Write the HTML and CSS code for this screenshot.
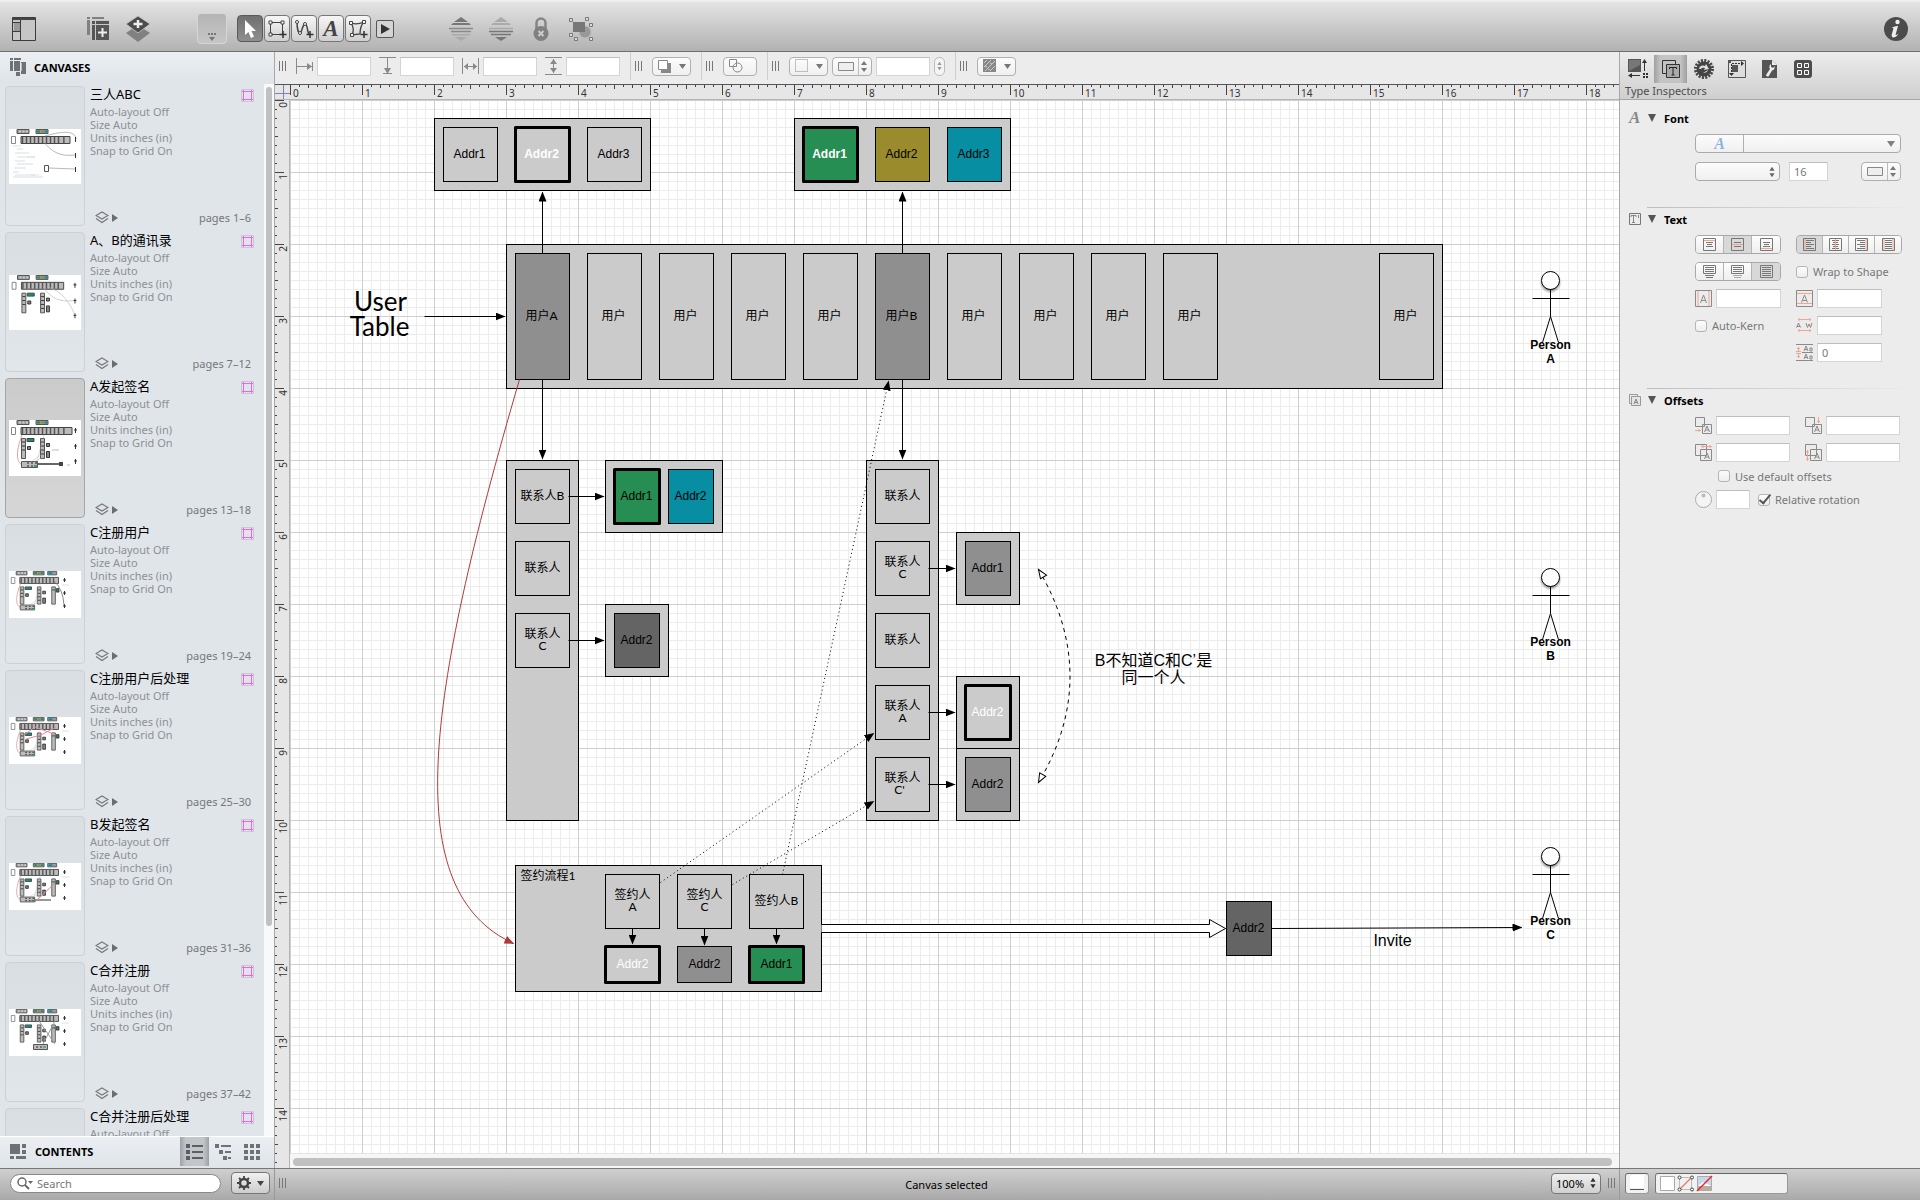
FILE: index.html
```html
<!DOCTYPE html>
<html lang="zh-CN">
<head>
<meta charset="utf-8">
<title>Canvas selected</title>
<link rel="stylesheet" href="styles.css">
</head>
<body>

<!-- shared symbols -->
<svg class="defs" aria-hidden="true">
  <defs>
    <symbol id="layers" viewBox="0 0 14 13"><path d="M7 1l6 3.5L7 8 1 4.500z M1 7.500L7 11.500l6-4" fill="none" stroke="#777" stroke-width="1.200"/></symbol>
    <symbol id="artboard" viewBox="0 0 13 13"><path d="M.5.5h12v12H.5z" fill="none" stroke="#c6c9cf"/><path d="M2.500 1v11M10.500 1v11M1 2.500h11M1 10.500h11" stroke="#f25ff2" fill="none"/></symbol>
    <symbol id="updown" viewBox="0 0 7 12"><path d="M3.500 0L6.500 4.500H.5zM3.500 12L.5 7.500h6z"/></symbol>
    <symbol id="mini-top" viewBox="0 0 72 56">
      <path d="M8 .5h12v4H8zM27 .5h12v4H27z" fill="#999" stroke="#555"/>
      <path d="M10 1.500h2v2h-2zM13.500 1.500h2v2h-2zM17 1.500h2v2h-2z" fill="#ccc"/>
      <path d="M28 1.500h3v2h-3z" fill="#268e52"/><path d="M32 1.500h3v2h-3z" fill="#9a8c2c"/><path d="M35.500 1.500h3v2h-3z" fill="#078ea3"/>
      <path d="M2.500 7.500h4v7h-4z" fill="#fff" stroke="#888"/>
      <path d="M12 7.500h43v7H12z" fill="#bbb" stroke="#444"/>
      <path d="M13.500 8v6M17.500 8v6M21.500 8v6M25.500 8v6M29.500 8v6M33.500 8v6M37.500 8v6M41.500 8v6M45.500 8v6M49.500 8v6" stroke="#555" stroke-width="1.500"/>
    </symbol>
    <symbol id="mini-lists" viewBox="0 0 72 56">
      <path d="M12.500 18.500h4v20h-4zM31.500 18.500h4v20h-4z" fill="#bbb" stroke="#555"/>
      <path d="M13 22h3M13 26h3M13 30h3M32 22h3M32 26h3M32 30h3M32 34h3" stroke="#333"/>
      <path d="M18 18.500h7v3h-7z" fill="#078ea3" stroke="#444"/><path d="M18.500 19h3v2h-3z" fill="#268e52"/>
      <path d="M18.500 26.500h3v3h-3zM37.500 23.500h3v3h-3zM37.500 31.500h3v6h-3z" fill="#888" stroke="#333"/>
    </symbol>
    <symbol id="mini-flow" viewBox="0 0 72 56">
      <path d="M13 15C6 34 8 42 13 45" fill="none" stroke="#d98a86" stroke-width=".8"/>
      <path d="M12.500 41.500h16v6h-16z" fill="#bbb" stroke="#555"/>
      <path d="M18 43h2M22 43h2M26 43h2M18 46h2M22 46h2" stroke="#555" stroke-width="1.500"/><path d="M25 46h3" stroke="#268e52" stroke-width="1.500"/>
      <path d="M22 42L33 34M25 42L34 37M28 41L35 15" stroke="#aaa" stroke-width=".4"/>
    </symbol>
    <symbol id="mini-people" viewBox="0 0 72 56"><path d="M66.500 8v5M66.500 24v5M66.500 39v5M65 10h3M65 26h3M65 41h3" stroke="#333" fill="none"/></symbol>
    <symbol id="mini-c" viewBox="0 0 72 47">
      <g transform="scale(.9 .86)"><use href="#mini-top" width="72" height="56"/><use href="#mini-lists" width="72" height="56"/>
      <path d="M43 .5h10v4H43z" fill="#999" stroke="#555"/><path d="M44 1.500h4v2h-4z" fill="#078ea3"/>
      <path d="M47.500 18.500h4v20h-4z" fill="#bbb" stroke="#555"/><path d="M48 22h3M52.500 20.500h3v4h-3z" fill="#268e52" stroke="#333"/></g>
      <path d="M55.500 7v4M55.500 20v4M55.500 33v4M54 9h3M54 22h3M54 35h3" stroke="#333" fill="none"/>
      <path d="M53 14h7" stroke="#ccc" stroke-width=".6"/>
    </symbol>
    <marker id="head" markerWidth="10" markerHeight="8" refX="9" refY="4" orient="auto-start-reverse" markerUnits="userSpaceOnUse"><path d="M0 0L10 4 0 8z"/></marker>
    <marker id="head-red" markerWidth="10" markerHeight="8" refX="9" refY="4" orient="auto" markerUnits="userSpaceOnUse"><path d="M0 0L10 4 0 8z" fill="#b03a35"/></marker>
    <marker id="head-open" markerWidth="12" markerHeight="9" refX="10" refY="4" orient="auto-start-reverse" markerUnits="userSpaceOnUse"><path d="M1 1L10 4 1 8z" fill="#fff" stroke="#000"/></marker>
    <pattern id="ticks-x" width="72" height="15" patternUnits="userSpaceOnUse"><path d="M.5 0v10M9.500 0v2M18.500 0v3M27.500 0v2M36.500 0v4M45.500 0v2M54.500 0v3M63.500 0v2" stroke="#444"/></pattern>
    <pattern id="ticks-y" width="15" height="72" patternUnits="userSpaceOnUse"><path d="M0 .5h9M0 9.500h2M0 18.500h2M0 27.500h2M0 36.500h3M0 45.500h2M0 54.500h2M0 63.500h2" stroke="#444"/></pattern>
    <filter id="soft" x="-30%" y="-30%" width="160%" height="170%"><feDropShadow dx="0" dy="2" stdDeviation="1" flood-opacity=".4"/></filter>
  </defs>
</svg>

<header class="toolbar">
  <button class="tool-plain at-start" aria-label="Sidebar"><svg width="24" height="24" viewBox="0 0 24 24"><path d="M.5.5h23v23H.5z" fill="#c6c6c6" stroke="#3c3c3c"/><path d="M.5 2.500h23M8.500 3v20M1 5.500h7M1 14.500h7" stroke="#3c3c3c" fill="none"/><path d="M1 1h22v2H1z" fill="#444"/><path d="M2 6h6v8H2z" fill="#999"/></svg></button>
  <span class="cluster">
    <button class="tool-plain" aria-label="New canvas"><svg width="24" height="24" viewBox="0 0 24 24"><path d="M1 1h3v2H1zM6 1h12v2H6zM1 4h3v15H1z" fill="#818181"/><path d="M6 5h17v3H6zM6 9h3v15H6zM10 9h13v15H10z" fill="#565656"/><path d="M5 4.500h18M5.500 4v20M9.500 5v19M6 8.500h17" stroke="#c8c8c8"/><path d="M16.500 12v9M12 16.500h9" stroke="#eee" stroke-width="2"/></svg></button>
    <button class="tool-plain" aria-label="New layer"><svg width="24" height="26" viewBox="0 0 24 26"><path d="M12 9l12 8-12 9-12-9z" fill="#818181"/><path d="M12 0l12 8-12 9L0 8z" fill="#4c4c4c" stroke="#ccc" stroke-width=".8"/><path d="M12 4v8M7.500 8h9" stroke="#eee" stroke-width="2.500"/></svg></button>
  </span>
  <button class="style-well" aria-label="Style"><svg width="12" height="8" viewBox="0 0 12 8"><path d="M2 0h2v2H2zM5 0h2v2H5zM8 0h2v2H8zM3 4h6L6 8z" fill="#777"/></svg></button>
  <span class="tools">
    <button class="tool on" aria-label="Selection"><svg width="16" height="20" viewBox="0 0 16 20"><path d="M3 1v15l3.500-3 2.500 6 3-1.500-2.500-5.500H14z" fill="#fff"/></svg></button>
    <button class="tool" aria-label="Shape"><svg width="20" height="20" viewBox="0 0 20 20"><path d="M3.500 3.500h12v12h-12z" fill="none" stroke="#444"/><path d="M2 2h3v3H2zM14 2h3v3h-3zM2 14h3v3H2z" fill="#fff" stroke="#444"/><path d="M16 12v7M12.500 15.500h7" stroke="#333" stroke-width="1.500"/></svg></button>
    <button class="tool" aria-label="Line"><svg width="20" height="20" viewBox="0 0 20 20"><path d="M3 3C3 8 4 14 6 14S8 6 11 5c3 0 2 9 4 10" fill="none" stroke="#444" stroke-width="1.500"/><circle cx="3" cy="3" r="1.500" fill="#fff" stroke="#444"/><circle cx="6" cy="14" r="1.500" fill="#fff" stroke="#444"/><circle cx="11" cy="5" r="1.500" fill="#fff" stroke="#444"/><path d="M16 12v7M12.500 15.500h7" stroke="#333" stroke-width="1.500"/></svg></button>
    <button class="tool letter" aria-label="Text">A</button>
    <button class="tool" aria-label="Pen"><svg width="20" height="20" viewBox="0 0 20 20"><path d="M3 4q6 2 13-1-4 4-4 12l-8 1q3-6-1-12z" fill="none" stroke="#444" stroke-width="1.300"/><path d="M1.500 2.500h3v3h-3zM14.500 1.500h3v3h-3zM2.500 14.500h3v3h-3z" fill="#fff" stroke="#444"/><path d="M16 12v7M12.500 15.500h7" stroke="#333" stroke-width="1.500"/></svg></button>
  </span>
  <button class="play" aria-label="More tools"><svg width="9" height="10" viewBox="0 0 9 10"><path d="M0 0l9 5-9 5z" fill="#333"/></svg></button>
  <span class="arrange">
    <button class="tool-plain" aria-label="Bring forward"><svg width="24" height="24" viewBox="0 0 24 24"><path d="M12 0l7 5H5z" fill="#777"/><path d="M2 8l2-2h16l2 2z" fill="#777"/><path d="M0 11.500h24M2 14.500h20" stroke="#8a8a8a" stroke-width="1.500"/><path d="M2 17h20l-2 1.500H4zM6 20h12l-6 4z" fill="#aaa"/></svg></button>
    <button class="tool-plain" aria-label="Send backward"><svg width="24" height="24" viewBox="0 0 24 24"><path d="M12 0l7 5H5z" fill="#aaa"/><path d="M2 8l2-2h16l2 2z" fill="#aaa"/><path d="M0 11.500h24" stroke="#aaa" stroke-width="1.500"/><path d="M0 14.500h24M2 17.500h20" stroke="#777" stroke-width="1.500"/><path d="M6 20h12l-6 4z" fill="#777"/></svg></button>
    <button class="tool-plain" aria-label="Lock"><svg width="24" height="24" viewBox="0 0 24 24"><path d="M7.500 13V6a4.500 4.500 0 0 1 9 0v7" fill="none" stroke="#858585" stroke-width="2.500"/><circle cx="12" cy="16.500" r="7.500" fill="#808080"/><path d="M9.500 14l5 5M14.500 14l-5 5" stroke="#ccc" stroke-width="2"/></svg></button>
    <button class="tool-plain" aria-label="Group"><svg width="24" height="24" viewBox="0 0 24 24"><circle cx="16" cy="15" r="6" fill="#999" stroke="#bbb"/><path d="M4 5h12v10H4z" fill="#777"/><path d="M.5 1.500h3v3h-3zM16.500.5h3v3h-3zM.5 16.500h3v3h-3zM20.500 6.500h3v3h-3zM5.500 20.500h3v3h-3zM20.500 20.500h3v3h-3z" fill="#ddd" stroke="#777"/></svg></button>
  </span>
  <button class="tool-plain at-end" aria-label="Info"><svg width="24" height="24" viewBox="0 0 24 24"><circle cx="12" cy="12" r="12" fill="#4c4c4c"/><circle cx="13.500" cy="5" r="2.200" fill="#eee"/><path d="M8 10.500q4-2 6-1.500l-2.500 9q1.500 0 3-1.500-2 4-5.500 4-2-.5-1-4l1.500-5z" fill="#eee"/></svg></button>
</header>

<main class="workspace">
  <aside class="sidebar">
    <h2 class="panel-title"><svg width="18" height="18" viewBox="0 0 18 18"><path d="M1 0h3v2H1zM5 0h7v2H5zM1 3h3v10H1zM5 3h6v10H5zM12 4h5v12h-5zM7 14h4v4H7z" fill="#6f7275"/><path d="M12.500 5v8" stroke="#bbb"/></svg>CANVASES</h2>
    <div class="list-wrap">
      <div class="list">
        <article class="item"><div class="thumb"><svg class="paper" width="72" height="55" viewBox="0 0 72 55"><use href="#mini-top" width="72" height="56"/><path d="M55 7.500h6v7h-6z" fill="#bbb" stroke="#444"/><path d="M36 7C50 3 66 0 67 10M34 12C42 22 50 28 66 26M40 39L66 40" stroke="#999" fill="none" stroke-width=".7"/><path d="M35.500 36.500h4v6h-4z" fill="#fff" stroke="#555"/><path d="M66.500 8v5M66.500 24v5M66.500 38v5" stroke="#333"/><path d="M4 17h8M8 20h6M6 24h14M8 28h18M6 32h10M8 35h16M5 39h12M4 43h6M6 46h20M4 48h30" stroke="#d6dfe8"/><path d="M18 28h8M22 46h8" stroke="#d5e8d2"/></svg></div><div class="info"><h3>三人ABC<svg width="13" height="13"><use href="#artboard"/></svg></h3><p>Auto-layout Off<br>Size Auto<br>Units inches (in)<br>Snap to Grid On</p><div class="pages"><svg width="14" height="13"><use href="#layers"/></svg><i></i><span>pages 1–6</span></div></div></article>
        <article class="item"><div class="thumb"><svg class="paper" width="72" height="55" viewBox="0 0 72 56"><use href="#mini-top" width="72" height="56"/><use href="#mini-lists" width="72" height="56"/><use href="#mini-people" width="72" height="56"/><path d="M34 12C42 24 52 28 65 26M38 12C54 16 62 30 66 40" stroke="#bbb" fill="none" stroke-width=".7"/></svg></div><div class="info"><h3>A、B的通讯录<svg width="13" height="13"><use href="#artboard"/></svg></h3><p>Auto-layout Off<br>Size Auto<br>Units inches (in)<br>Snap to Grid On</p><div class="pages"><svg width="14" height="13"><use href="#layers"/></svg><i></i><span>pages 7–12</span></div></div></article>
        <article class="item"><div class="thumb current"><svg class="paper" width="72" height="56" viewBox="0 0 72 56"><use href="#mini-top" width="72" height="56"/><path d="M55 7.500h8v7h-8z" fill="#bbb" stroke="#444"/><use href="#mini-lists" width="72" height="56"/><use href="#mini-flow" width="72" height="56"/><use href="#mini-people" width="72" height="56"/><path d="M29 44h21" stroke="#333" stroke-width="1.500"/><path d="M50 42h4v4h-4z" fill="#444"/><path d="M43 30h7M58 45h3" stroke="#bbb"/></svg></div><div class="info"><h3>A发起签名<svg width="13" height="13"><use href="#artboard"/></svg></h3><p>Auto-layout Off<br>Size Auto<br>Units inches (in)<br>Snap to Grid On</p><div class="pages"><svg width="14" height="13"><use href="#layers"/></svg><i></i><span>pages 13–18</span></div></div></article>
        <article class="item"><div class="thumb"><svg class="paper" width="72" height="47" viewBox="0 0 72 47"><use href="#mini-c" width="72" height="47"/><g transform="scale(.9 .82)"><use href="#mini-flow" width="72" height="56"/></g><path d="M45 10Q54 18 55 34" fill="none" stroke="#888"/></svg></div><div class="info"><h3>C注册用户<svg width="13" height="13"><use href="#artboard"/></svg></h3><p>Auto-layout Off<br>Size Auto<br>Units inches (in)<br>Snap to Grid On</p><div class="pages"><svg width="14" height="13"><use href="#layers"/></svg><i></i><span>pages 19–24</span></div></div></article>
        <article class="item"><div class="thumb"><svg class="paper" width="72" height="47" viewBox="0 0 72 47"><use href="#mini-c" width="72" height="47"/><g transform="scale(.9 .82)"><use href="#mini-flow" width="72" height="56"/></g><path d="M15 18L26 10 45 17M17 22L32 18 47 10" fill="none" stroke="#e58a9a"/></svg></div><div class="info"><h3>C注册用户后处理<svg width="13" height="13"><use href="#artboard"/></svg></h3><p>Auto-layout Off<br>Size Auto<br>Units inches (in)<br>Snap to Grid On</p><div class="pages"><svg width="14" height="13"><use href="#layers"/></svg><i></i><span>pages 25–30</span></div></div></article>
        <article class="item"><div class="thumb"><svg class="paper" width="72" height="47" viewBox="0 0 72 47"><use href="#mini-c" width="72" height="47"/><g transform="scale(.9 .82)"><use href="#mini-flow" width="72" height="56"/></g><path d="M26 37h16" stroke="#333"/><path d="M26 39L46 20" stroke="#d98a86"/></svg></div><div class="info"><h3>B发起签名<svg width="13" height="13"><use href="#artboard"/></svg></h3><p>Auto-layout Off<br>Size Auto<br>Units inches (in)<br>Snap to Grid On</p><div class="pages"><svg width="14" height="13"><use href="#layers"/></svg><i></i><span>pages 31–36</span></div></div></article>
        <article class="item"><div class="thumb"><svg class="paper" width="72" height="47" viewBox="0 0 72 47"><use href="#mini-c" width="72" height="47"/><path d="M24.500 35.500h14v5h-14z" fill="#bbb" stroke="#555"/><path d="M27 38h2M31 38h2" stroke="#333"/><path d="M34 38h3" stroke="#268e52"/><path d="M30 12L46 35M46 12L34 35" stroke="#999"/></svg></div><div class="info"><h3>C合并注册<svg width="13" height="13"><use href="#artboard"/></svg></h3><p>Auto-layout Off<br>Size Auto<br>Units inches (in)<br>Snap to Grid On</p><div class="pages"><svg width="14" height="13"><use href="#layers"/></svg><i></i><span>pages 37–42</span></div></div></article>
        <article class="item"><div class="thumb"></div><div class="info"><h3>C合并注册后处理<svg width="13" height="13"><use href="#artboard"/></svg></h3><p>Auto-layout Off</p></div></article>
      </div>
      <div class="vscroll"><div class="vthumb"></div></div>
    </div>
    <div class="panel-title contents"><svg width="18" height="18" viewBox="0 0 18 18"><path d="M1 1h10v10H1zM13 1h4v4h-4zM13 7h4v4h-4zM1 13h4v3H1zM7 13h10v3H7z" fill="#6f7275"/></svg><h2>CONTENTS</h2>
      <button class="view on" aria-label="List"><svg width="17" height="16" viewBox="0 0 17 16"><path d="M0 0h4v4H0zM0 6h4v4H0zM0 12h4v4H0zM6 1h11v2H6zM6 7h11v2H6zM6 13h11v2H6z" fill="#5c5f62"/></svg></button>
      <button class="view" aria-label="Outline"><svg width="17" height="16" viewBox="0 0 17 16"><path d="M0 0h4v4H0zM4 6h4v4H4zM8 12h4v4H8zM6 1h10v2H6zM10 7h6v2h-6zM13 13h3v2h-3z" fill="#6f7275"/></svg></button>
      <button class="view" aria-label="Grid"><svg width="17" height="16" viewBox="0 0 17 16"><path d="M0 0h4v4H0zM6 0h4v4H6zM12 0h4v4h-4zM0 6h4v4H0zM6 6h4v4H6zM12 6h4v4h-4zM0 12h4v4H0zM6 12h4v4H6zM12 12h4v4h-4z" fill="#6f7275"/></svg></button>
    </div>
  </aside>

  <section class="stage">
    <div class="options">
      <span class="group"><i class="grip"></i>
        <label class="dim"><svg width="17" height="18" viewBox="0 0 17 18"><path d="M.5 1v16M1 9.500h15M16.500 5v9" stroke="#8a8a8a" fill="none"/><path d="M11 6l5 3.500-5 3.500z" fill="#8a8a8a"/></svg><input class="field" aria-label="X"></label>
        <label class="dim"><svg width="17" height="18" viewBox="0 0 17 18"><path d="M0 .5h17M8.500 1v15M4 16.500h9" stroke="#8a8a8a" fill="none"/><path d="M5 11l3.500 6 3.500-6z" fill="#8a8a8a"/></svg><input class="field" aria-label="Y"></label>
        <label class="dim"><svg width="17" height="18" viewBox="0 0 17 18"><path d="M.5 1v16M16.500 1v16M2 9.500h13" stroke="#8a8a8a" fill="none"/><path d="M2 9.500l4-3.500v7zM15 9.500L11 6v7z" fill="#8a8a8a"/></svg><input class="field" aria-label="Width"></label>
        <label class="dim"><svg width="17" height="18" viewBox="0 0 17 18"><path d="M0 .5h17M0 17.500h17M8.500 2v14" stroke="#8a8a8a" fill="none"/><path d="M8.500 2L12 7H5zM8.500 16L5 11h7z" fill="#8a8a8a"/></svg><input class="field" aria-label="Height"></label>
      </span>
      <span class="group"><i class="grip"></i><button class="pill w39" aria-label="Shadow"><svg width="30" height="14" viewBox="0 0 30 14"><path d="M4 4h10v10H4z" fill="#888"/><path d="M1.500 1.500h9v9h-9z" fill="#fff" stroke="#888"/><path d="M22 5h7l-3.500 5z" fill="#777"/></svg></button></span>
      <span class="group"><i class="grip"></i><button class="pill w34 left" aria-label="Combine"><svg width="14" height="14" viewBox="0 0 14 14"><path d="M.5.5h7v7h-7z" fill="none" stroke="#888"/><circle cx="8.500" cy="8.500" r="4.500" fill="none" stroke="#888"/></svg></button></span>
      <span class="group"><i class="grip"></i><button class="pill w39" aria-label="Stroke"><svg width="30" height="14" viewBox="0 0 30 14"><path d="M1.500.5h12v12h-12z" fill="none" stroke="#888" stroke-dasharray="1 1"/><path d="M22 5h7l-3.500 5z" fill="#777"/></svg></button><button class="pill w40" aria-label="Line type"><svg width="36" height="17" viewBox="0 0 36 17"><path d="M4.500 4.500h15v8h-15z" fill="#eee" stroke="#888"/><path d="M24.500 0v17" stroke="#bbb"/><path d="M30 3l3 4h-6zM30 14l-3-4h6z" fill="#777"/></svg></button><input class="field" aria-label="Thickness"><button class="stepper" aria-label="Step"><svg width="5" height="12" viewBox="0 0 7 12"><use href="#updown" fill="#999"/></svg></button></span>
      <span class="group"><i class="grip"></i><button class="pill w39" aria-label="Image fill"><svg width="30" height="14" viewBox="0 0 30 14"><path d="M1 0h13v13H1z" fill="#888"/><path d="M2 4l3-3M2 8l7-7M3 12L13 2M8 12l5-5M3 7l2 1M8 4l2 1M6 10l2 1" stroke="#ccc"/><path d="M22 5h7l-3.500 5z" fill="#777"/></svg></button></span>
    </div>

    <div class="corner"></div>
    <svg class="ruler-x" width="100%" height="15">
      <rect width="100%" height="15" fill="url(#ticks-x)"/>
      <g><text x="3" y="12">0</text><text x="75" y="12">1</text><text x="147" y="12">2</text><text x="219" y="12">3</text><text x="291" y="12">4</text><text x="363" y="12">5</text><text x="435" y="12">6</text><text x="507" y="12">7</text><text x="579" y="12">8</text><text x="651" y="12">9</text><text x="723" y="12">10</text><text x="795" y="12">11</text><text x="867" y="12">12</text><text x="939" y="12">13</text><text x="1011" y="12">14</text><text x="1083" y="12">15</text><text x="1155" y="12">16</text><text x="1227" y="12">17</text><text x="1299" y="12">18</text></g>
    </svg>
    <div class="ruler-y"><svg width="14" height="100%">
      <rect width="14" height="100%" fill="url(#ticks-y)"/>
      <g transform="rotate(-90)"><text x="-2" y="12">0</text><text x="-74" y="12">1</text><text x="-146" y="12">2</text><text x="-218" y="12">3</text><text x="-290" y="12">4</text><text x="-362" y="12">5</text><text x="-434" y="12">6</text><text x="-506" y="12">7</text><text x="-578" y="12">8</text><text x="-650" y="12">9</text><text x="-722" y="12">10</text><text x="-794" y="12">11</text><text x="-866" y="12">12</text><text x="-938" y="12">13</text><text x="-1010" y="12">14</text></g>
    </svg></div>

    <div class="board">
      <svg class="diagram" width="100%" height="100%">
        <g transform="translate(.5 .5)">
          <!-- address groups -->
          <g class="box"><rect x="144" y="18" width="216" height="72"/><rect x="504" y="18" width="216" height="72"/></g>
          <g class="box"><rect x="153" y="27" width="54" height="54"/><rect class="thick" x="225" y="27" width="54" height="54"/><rect x="297" y="27" width="54" height="54"/>
            <rect class="green thick" x="513" y="27" width="54" height="54"/><rect class="olive" x="585" y="27" width="54" height="54"/><rect class="teal" x="657" y="27" width="54" height="54"/></g>
          <g class="addr"><text x="179" y="57">Addr1</text><text class="white bold" x="251" y="57">Addr2</text><text x="323" y="57">Addr3</text><text class="white bold" x="539" y="57">Addr1</text><text x="611" y="57">Addr2</text><text x="683" y="57">Addr3</text></g>

          <!-- user table -->
          <g class="box"><rect x="216" y="144" width="936" height="144"/><rect class="mid" x="225" y="153" width="54" height="126"/><rect x="297" y="153" width="54" height="126"/><rect x="369" y="153" width="54" height="126"/><rect x="441" y="153" width="54" height="126"/><rect x="513" y="153" width="54" height="126"/><rect class="mid" x="585" y="153" width="54" height="126"/><rect x="657" y="153" width="54" height="126"/><rect x="729" y="153" width="54" height="126"/><rect x="801" y="153" width="54" height="126"/><rect x="873" y="153" width="54" height="126"/><rect x="1089" y="153" width="54" height="126"/></g>
          <g class="cn"><text x="251" y="219">用户A</text><text x="323" y="219">用户</text><text x="395" y="219">用户</text><text x="467" y="219">用户</text><text x="539" y="219">用户</text><text x="611" y="219">用户B</text><text x="683" y="219">用户</text><text x="755" y="219">用户</text><text x="827" y="219">用户</text><text x="899" y="219">用户</text><text x="1115" y="219">用户</text></g>
          <g class="big"><text x="90" y="210">User</text><text x="89" y="235">Table</text></g>

          <!-- contact lists -->
          <g class="box"><rect x="216" y="360" width="72" height="360"/><rect x="225" y="369" width="54" height="54"/><rect x="225" y="441" width="54" height="54"/><rect x="225" y="513" width="54" height="54"/>
            <rect x="315" y="360" width="117" height="72"/><rect class="green thick" x="324" y="369" width="45" height="54"/><rect class="teal" x="378" y="369" width="45" height="54"/>
            <rect x="315" y="504" width="63" height="72"/><rect class="dark" x="324" y="513" width="45" height="54"/>
            <rect x="576" y="360" width="72" height="360"/><rect x="585" y="369" width="54" height="54"/><rect x="585" y="441" width="54" height="54"/><rect x="585" y="513" width="54" height="54"/><rect x="585" y="585" width="54" height="54"/><rect x="585" y="657" width="54" height="54"/>
            <rect x="666" y="432" width="63" height="72"/><rect class="mid" x="675" y="441" width="45" height="54"/>
            <rect x="666" y="576" width="63" height="72"/><rect class="thick" x="675" y="585" width="45" height="54"/>
            <rect x="666" y="648" width="63" height="72"/><rect class="mid" x="675" y="657" width="45" height="54"/></g>
          <g class="cn"><text x="252" y="399">联系人B</text><text x="252" y="471">联系人</text><text x="252" y="537">联系人</text><text x="252" y="549">C</text>
            <text x="612" y="399">联系人</text><text x="612" y="465">联系人</text><text x="612" y="477">C</text><text x="612" y="543">联系人</text><text x="612" y="609">联系人</text><text x="612" y="621">A</text><text x="612" y="681">联系人</text><text x="609" y="693">C'</text></g>
          <g class="addr"><text x="346" y="399">Addr1</text><text x="400" y="399">Addr2</text><text x="346" y="543">Addr2</text><text x="697" y="471">Addr1</text><text class="white" x="697" y="615">Addr2</text><text x="697" y="687">Addr2</text></g>

          <!-- signing flow -->
          <g class="box"><rect x="225" y="765" width="306" height="126"/><rect x="315" y="774" width="54" height="54"/><rect x="387" y="774" width="54" height="54"/><rect x="459" y="774" width="54" height="54"/><rect class="thick" x="315" y="846" width="54" height="36"/><rect class="mid" x="387" y="846" width="54" height="36"/><rect class="green thick" x="459" y="846" width="54" height="36"/><rect class="dark" x="936" y="801" width="45" height="54"/></g>
          <g class="cn"><text class="start" x="230" y="779">签约流程1</text><text x="342" y="798">签约人</text><text x="342" y="810">A</text><text x="414" y="798">签约人</text><text x="414" y="810">C</text><text x="486" y="804">签约人B</text></g>
          <g class="addr"><text class="white" x="342" y="867">Addr2</text><text x="414" y="867">Addr2</text><text x="486" y="867">Addr1</text><text x="958" y="831">Addr2</text></g>

          <!-- connectors -->
          <g class="edge"><path d="M252 153V92"/><path d="M612 153V92"/><path d="M252 279V358"/><path d="M612 279V358"/><path d="M134 216H214"/><path d="M278 396H313"/><path d="M278 540H313"/><path d="M638 468H664"/><path d="M638 612H664"/><path d="M638 684H664"/><path d="M342 828V843"/><path d="M414 828V844"/><path d="M486 828V843"/><path d="M981 828L1231 827"/></g>
          <g class="edge dots"><path d="M370 782L583 633"/><path d="M442 784L583 701"/><path d="M492 774L598 281"/></g>
          <path class="edge-red" d="M229 279C135 600 108 790 223 843"/>
          <path class="edge-dash" d="M748 469C790 540 790 612 748 682"/>
          <path class="pipe" d="M531 824H919V819L935 828 919 837V832H531"/>

          <!-- people -->
          <g class="person"><circle cx="1260" cy="180" r="9"/><path d="M1260 189v27M1242 198h37M1260 216l-8 26M1260 216l8 26"/><text x="1260" y="248">Person</text><text x="1260" y="262">A</text></g>
          <g class="person"><circle cx="1260" cy="477" r="9"/><path d="M1260 486v27M1242 495h37M1260 513l-8 26M1260 513l8 26"/><text x="1260" y="545">Person</text><text x="1260" y="559">B</text></g>
          <g class="person"><circle cx="1260" cy="756" r="9"/><path d="M1260 765v27M1242 774h37M1260 792l-8 26M1260 792l8 26"/><text x="1260" y="824">Person</text><text x="1260" y="838">C</text></g>

          <g class="note"><text x="863" y="565">B不知道C和C’是</text><text x="863" y="582">同一个人</text><text x="1102" y="845">Invite</text></g>
        </g>
      </svg>
    </div>
    <div class="hscroll"><div class="hthumb"></div></div>
  </section>

  <aside class="inspector">
    <div class="tabs">
      <div class="tab-row">
        <button class="tab" aria-label="Properties"><svg width="20" height="20" viewBox="0 0 20 20"><path d="M0 0h13v13H0z" fill="#555"/><path d="M1 12L12 6V1H1z" fill="#777"/><path d="M16.500 2v10M3 16.500h9" stroke="#333"/><path d="M16.500 0L19 4h-5zM0 16.500L4 14v5zM15 14h2v2h-2zM18 14h2v2h-2zM15 17h2v2h-2zM18 17h2v2h-2z" fill="#333"/></svg></button>
        <button class="tab on" aria-label="Type"><svg width="20" height="20" viewBox="0 0 20 20"><path d="M1.500 1.500h13v13h-13z" fill="none" stroke="#333"/><path d="M5.500 5.500h13v13h-13z" fill="#aaa" stroke="#333"/><path d="M8.500 10V8.500h7V10M12 9v7M10.500 16h3" stroke="#222" fill="none"/></svg></button>
        <button class="tab" aria-label="Settings"><svg width="20" height="20" viewBox="0 0 20 20"><circle cx="10" cy="10" r="8.500" fill="none" stroke="#444" stroke-width="3" stroke-dasharray="2 1.340"/><circle cx="10" cy="10" r="7.500" fill="#444"/><path d="M5 10a4 4 0 0 1 6-3l1-2 3 5-5 1 1-2q-3-1-4 1zM9 14q4 0 5-3" fill="#ddd"/></svg></button>
        <button class="tab" aria-label="Canvas"><svg width="20" height="20" viewBox="0 0 20 20"><path d="M1.500 1.500h17v17h-17z" fill="#ddd" stroke="#555"/><path d="M1 1h3v3H1zM5 6h6v7H5z" fill="#555"/><path d="M5 4.500h12M4.500 5v12" stroke="#333" stroke-dasharray="2 1"/><path d="M14 2l3 2.500L14 7zM2 14l2.500 3L7 14z" fill="#333"/></svg></button>
        <button class="tab" aria-label="Document"><svg width="20" height="20" viewBox="0 0 20 20"><path d="M2 1h10l5 5v13H2z" fill="#555"/><path d="M12 1v5h5" fill="#eee"/><path d="M6 16l4-6a3.500 3.500 0 0 1 1-5v3l2 1 1.500-2q.5 4-2.500 4.500l-3.500 6q-2 .5-2.500-1.500z" fill="#eee"/></svg></button>
        <button class="tab" aria-label="Stencils"><svg width="20" height="20" viewBox="0 0 20 20"><rect x="1" y="1" width="18" height="18" rx="3" fill="#4c4c4c"/><path d="M4.500 4.500h4v4h-4zM11.500 4.500h4v4h-4zM4.500 11.500h4v4h-4zM11.500 11.500h4v4h-4z" fill="#555" stroke="#fff"/></svg></button>
      </div>
      <p>Type Inspectors</p>
    </div>

    <section class="sect">
      <h3><span class="serif-a">A</span><i class="disclose"></i>Font</h3>
      <div class="rows loose">
        <div class="row split"><button class="fontbtn" aria-label="Fonts">A</button><select aria-label="Family" class="family"><option></option></select></div>
        <div class="row gap9"><span class="sel w85"><select aria-label="Typeface"><option></option></select><svg width="6" height="12" viewBox="0 0 7 12"><use href="#updown" fill="#666"/></svg></span><input class="field w39" aria-label="Size" value="16"><button class="pill w40 push" aria-label="Color"><svg width="36" height="17" viewBox="0 0 36 17"><path d="M4.500 4.500h15v8h-15z" fill="#eee" stroke="#888"/><path d="M24.500 0v17" stroke="#bbb"/><path d="M30 3l3 4h-6zM30 14l-3-4h6z" fill="#777"/></svg></button></div>
      </div>
    </section>

    <section class="sect">
      <h3><svg width="12" height="12" viewBox="0 0 12 12"><path d="M.5.5h11v11H.5z" fill="none" stroke="#777"/><path d="M2 4V2.500h5V4M4.500 3v6M3 9.500h3M9.500 2v3" stroke="#888" fill="none"/></svg><i class="disclose"></i>Text</h3>
      <div class="rows">
        <div class="row two">
          <span class="seg s28"><button aria-label="Top"><svg viewBox="0 0 13 13"><path d="M.5.5h12v12H.5z M3 4.500h7M4 6.500h5M3 8.500h7"/><path class="o" d="M1 2.500h11"/></svg></button><button class="on" aria-label="Middle"><svg viewBox="0 0 13 13"><path d="M.5.5h12v12H.5z M3 4.500h7M3 8.500h7"/><path class="o" d="M1 6.500h11"/></svg></button><button aria-label="Bottom"><svg viewBox="0 0 13 13"><path d="M.5.5h12v12H.5z M3 4.500h7M4 6.500h5M3 8.500h7"/><path class="o" d="M1 10.500h11"/></svg></button></span>
          <span class="seg s26"><button class="on" aria-label="Left"><svg viewBox="0 0 13 13"><path d="M.5.5h12v12H.5z M3 2.500h8M3 4.500h5M3 6.500h8M3 8.500h5M3 10.500h8"/><path class="o" d="M2 1v11"/></svg></button><button aria-label="Center"><svg viewBox="0 0 13 13"><path d="M.5.5h12v12H.5z M3 2.500h7M4 4.500h5M3 6.500h7M4 8.500h5M3 10.500h7"/><path class="o" d="M6.500 1v11"/></svg></button><button aria-label="Right"><svg viewBox="0 0 13 13"><path d="M.5.5h12v12H.5z M2 2.500h8M5 4.500h5M2 6.500h8M5 8.500h5M2 10.500h8"/><path class="o" d="M11 1v11"/></svg></button><button aria-label="Justify"><svg viewBox="0 0 13 13"><path d="M.5.5h12v12H.5z M3 2.500h7M3 4.500h7M3 6.500h7M3 8.500h7M3 10.500h7"/><path class="o" d="M2 1v11M11 1v11"/></svg></button></span>
        </div>
        <div class="row two">
          <span class="seg s28"><button aria-label="Overflow"><svg viewBox="0 0 13 13"><path d="M.5.5h12v8H.5zM2 2.500h9M2 4.500h9M2 6.500h9M2 10.500h9M3 12.500h7"/></svg></button><button aria-label="Clip"><svg viewBox="0 0 13 13"><path d="M.5.5h12v8H.5zM2 2.500h9M2 4.500h9M2 6.500h9"/><path class="l" d="M2 10.500h9M3 12.500h7"/></svg></button><button class="on" aria-label="Fit"><svg viewBox="0 0 13 13"><path d="M.5.5h12v12H.5zM2 2.500h9M2 4.500h9M2 6.500h9M2 8.500h9M2 10.500h9"/></svg></button></span>
          <label class="check"><input type="checkbox">Wrap to Shape</label>
        </div>
        <div class="row two">
          <label class="mini"><svg viewBox="0 0 17 17"><path d="M.5.5h16v16H.5zM5.500 13L8.500 5l3 8M6.500 10.500h4"/><path class="o" d="M3 1v15M14 1v15"/></svg><input class="field w65" aria-label="Side margin"></label>
          <label class="mini"><svg viewBox="0 0 17 17"><path d="M.5.5h16v16H.5zM5.500 12.500L8.500 5l3 7.500M6.500 10.500h4"/><path class="o" d="M1 3.500h15M1 13.500h15"/></svg><input class="field w65" aria-label="Top margin"></label>
        </div>
        <div class="row two">
          <label class="check"><input type="checkbox">Auto-Kern</label>
          <label class="mini"><svg viewBox="0 0 17 17"><path d="M.5 10.500L2.500 6l2 4.500M1 9.500h3M10 6l1.500 4.500L13 7l1.500 3.500L16 6"/><path class="o" d="M2 2.500h13M2 13.500h13M3 1v3M14 1v3M3 12v3M14 12v3"/></svg><input class="field w65" aria-label="Character spacing"></label>
        </div>
        <div class="row two">
          <span></span>
          <label class="mini"><svg viewBox="0 0 17 17"><path d="M0 .5h17M6 8.500h11M0 16.500h17M8 7l2-5 2 5M8.500 5.500h3M16 7V4h-2v3h2M8 15l2-5 2 5M8.500 13.500h3M16 15v-3h-2v3h2"/><path class="o" d="M0 7.500h5M0 9.500h5M2.500 3v4M2.500 10v4M1 4.500h3M1 12.500h3"/></svg><input class="field w65" aria-label="Line spacing" value="0"></label>
        </div>
      </div>
    </section>

    <section class="sect">
      <h3><svg width="12" height="12" viewBox="0 0 12 12"><path d="M.5.5h8v9h-8z" fill="none" stroke="#999"/><path d="M2.500 2.500h9v9h-9z" fill="#e4e4e4" stroke="#999"/><path d="M5 10l2-5 2 5M5.500 8.500h3" stroke="#888" fill="none"/></svg><i class="disclose"></i>Offsets</h3>
      <div class="rows">
        <div class="row wide">
          <label class="mini"><svg viewBox="0 0 17 17"><path d="M.5.5h9v9h-9zM7.500 7.500h9v9h-9zM9.500 15L12 9l2.500 6M10 13h4"/><path class="o" d="M0 13.500h6M4 12v3"/></svg><input class="field w74" aria-label="Offset X"></label>
          <label class="mini"><svg viewBox="0 0 17 17"><path d="M.5.5h9v9h-9zM7.500 7.500h9v9h-9zM9.500 15L12 9l2.500 6M10 13h4"/><path class="o" d="M13.500 0v6M12 4.500h3"/></svg><input class="field w74" aria-label="Offset Y"></label>
        </div>
        <div class="row wide">
          <label class="mini"><svg viewBox="0 0 17 17"><path d="M.5.5h11v11H.5zM5.500 5.500h11v11h-11zM9.500 15L12 9l2.500 6M10 13h4"/><path class="o" d="M6 2.500h11M8 1v3M15 1v3"/></svg><input class="field w74" aria-label="Offset width"></label>
          <label class="mini"><svg viewBox="0 0 17 17"><path d="M.5.5h11v11H.5zM5.500 5.500h11v11h-11zM9.500 15L12 9l2.500 6M10 13h4"/><path class="o" d="M2.500 6v11M1 8h3M1 15h3"/></svg><input class="field w74" aria-label="Offset height"></label>
        </div>
        <div class="row inset"><label class="check"><input type="checkbox">Use default offsets</label></div>
        <div class="row"><label class="mini"><svg viewBox="0 0 17 17"><circle cx="8.500" cy="8.500" r="8" class="dial"/><circle cx="8.500" cy="4.500" r="2" class="knob"/></svg><input class="field w34" aria-label="Rotation"></label><label class="check rel"><input type="checkbox" checked>Relative rotation</label></div>
      </div>
    </section>
  </aside>
</main>

<footer class="status">
  <div class="status-left">
    <label class="search"><svg width="16" height="13" viewBox="0 0 16 13"><circle cx="5" cy="5" r="4" fill="none" stroke="#666" stroke-width="1.500"/><path d="M8 8l4 4" stroke="#666" stroke-width="2"/><path d="M11 4h5l-2.500 3z" fill="#666"/></svg><input type="search" placeholder="Search" aria-label="Search"></label>
    <button class="gear" aria-label="Actions"><svg width="28" height="14" viewBox="0 0 28 14"><circle cx="7" cy="7" r="4" fill="none" stroke="#444" stroke-width="2.500"/><path d="M7 0v3M7 11v3M0 7h3M11 7h3M2 2l2.500 2.500M9.500 9.500L12 12M12 2L9.500 4.500M4.500 9.500L2 12" stroke="#444" stroke-width="1.800"/><path d="M20 5h7l-3.500 5z" fill="#444"/></svg></button>
  </div>
  <div class="status-mid"><i class="grip"></i><span class="message">Canvas selected</span>
    <span class="sel zoom"><select aria-label="Zoom"><option>100%</option></select><svg width="6" height="12" viewBox="0 0 7 12"><use href="#updown" fill="#333"/></svg></span><i class="grip"></i></div>
  <div class="status-right">
    <button class="well w24" aria-label="Fill"><svg width="14" height="16" viewBox="0 0 14 16"><path d="M0 0h14v13H0z" fill="#fff"/><path d="M0 14.500h14" stroke="#555"/></svg></button>
    <button class="well w133" aria-label="Styles"><svg width="54" height="17" viewBox="0 0 54 17"><path d="M.5 1.500h14v14H.5z" fill="#fff" stroke="#aaa"/><path d="M19.500 2.500h12v12h-12z" fill="none" stroke="#bbb"/><path d="M19 15L32 2" stroke="#f37d6c" stroke-width="1.500"/><g fill="#fff" stroke="#444"><circle cx="19.500" cy="2.500" r="1.500"/><circle cx="32" cy="2.500" r="1.500"/><circle cx="19.500" cy="14.500" r="1.500"/><circle cx="32" cy="14.500" r="1.500"/></g><path d="M37.500 1.500h14v14h-14z" fill="#c4d9ef" stroke="#aaa"/><path d="M38 11h13v4H38z" fill="#b8ada0"/><path d="M38 11l5-4 8 4z" fill="#fff"/><path d="M37 16L52 1" stroke="#e22" stroke-width="1.500"/></svg></button>
  </div>
</footer>
</body>
</html>
```
FILE: styles.css
```css
* { box-sizing: border-box; }
html, body { height: 100%; }
body {
  margin: 0;
  display: flex;
  flex-direction: column;
  overflow: hidden;
  background: #ececec;
  color: #000;
  font: 11px/13px "Noto Sans", "Noto Sans CJK SC", sans-serif;
}
h2, h3, p { margin: 0; font: inherit; }
button, input, select { margin: 0; padding: 0; font: inherit; color: inherit; border: 0; background: none; }
svg { display: block; flex: none; }
.defs { position: absolute; width: 0; height: 0; }

/* toolbar */
.toolbar {
  flex: none;
  height: 52px;
  display: flex;
  align-items: center;
  padding: 6px 12px 0;
  background: linear-gradient(#f4f4f4, #e2e2e2 3px, #b2b2b2);
  border-bottom: 1px solid #6f6f6f;
}
.tool-plain { width: 24px; display: flex; justify-content: center; }
.cluster { display: flex; gap: 16px; margin-left: 50px; }
.style-well {
  width: 30px; height: 31px; margin-left: 47px;
  display: flex; align-items: flex-end; justify-content: center; padding-bottom: 2px;
  border: 1px solid #d6d6d6; border-radius: 4px;
  background: linear-gradient(#b4b4b4, #c6c6c6);
}
.tools { display: flex; gap: 1px; margin-left: 10px; }
.tool {
  width: 26px; height: 27px;
  display: flex; align-items: center; justify-content: center;
  border: 1px solid #777; border-radius: 4px;
  background: linear-gradient(#f6f6f6, #d0d0d0);
}
.tool.on { background: linear-gradient(#707070, #8f8f8f); border-color: #5a5a5a; }
.tool.letter { font: italic bold 23px/23px "Liberation Serif", serif; color: #444; }
.play {
  width: 18px; height: 18px; margin-left: 5px;
  display: flex; align-items: center; justify-content: center;
  border: 1px solid #555; border-radius: 2px; background: #d4d4d4;
}
.arrange { display: flex; gap: 16px; margin-left: 55px; }
.at-end { margin-left: auto; }

/* three column body */
.workspace { flex: 1; min-height: 0; display: grid; grid-template-columns: 275px 1fr 301px; }

/* sidebar */
.sidebar { display: flex; flex-direction: column; min-height: 0; background: #e0e5ea; border-right: 1px solid #a8a8a8; }
.panel-title {
  flex: none; height: 32px;
  display: flex; align-items: center; gap: 7px;
  padding: 0 0 2px 9px;
  font-weight: 700;
  background: linear-gradient(#ebeff3, #dfe4e9);
}
.contents { border-top: 1px solid #fff; gap: 8px; }
.contents h2 { margin-right: auto; }
.view { width: 29px; height: 29px; display: flex; align-items: center; justify-content: center; margin-left: -8px; }
.view:last-child { margin-right: 7px; }
.view.on { background: linear-gradient(90deg, #9da1a5, #c2c6ca 20%, #c2c6ca 80%, #9da1a5); }
.list-wrap { flex: 1; min-height: 0; display: flex; overflow: hidden; }
.list { flex: 1; display: flex; flex-direction: column; gap: 6px; padding: 2px 10px 0 5px; }
.item { flex: none; height: 140px; display: flex; gap: 5px; }
.thumb {
  width: 80px; flex: none;
  display: flex; align-items: center; justify-content: center;
  border: 1px solid #cdd1d5; border-radius: 4px;
  background: linear-gradient(#d9dee3, #e1e6ea);
}
.thumb.current { border: 1px solid #a5a5a5; background: linear-gradient(#cbcbcb, #d6d6d6); }
.paper { background: #fff; }
.info { flex: 1; display: flex; flex-direction: column; }
.info h3 { height: 16px; display: flex; justify-content: space-between; align-items: center; font-size: 13px; line-height: 16px; white-space: nowrap; }
.info h3 svg { margin-top: 2px; }
.info p { margin-top: 3px; color: #8e9092; }
.pages { margin-top: auto; padding: 0 3px 2px 5px; display: flex; align-items: center; gap: 3px; color: #75777a; }
.pages i { border: 4px solid transparent; border-left: 6px solid #6b6d70; border-right: 0; }
.pages span { margin-left: auto; }
.vscroll { width: 10px; padding: 3px 2px 0; background: #f8f9fa; }
.vthumb { height: 80%; width: 6px; border-radius: 3px; background: #c0c1c2; }

/* stage */
.stage { min-width: 0; min-height: 0; display: grid; grid-template-columns: 15px 1fr; grid-template-rows: 32px 16px 1fr 15px; background: #fff; }
.options { grid-column: 1 / -1; display: flex; background: #ececec; padding-left: 4px; }
.group { display: flex; align-items: center; height: 28px; padding-right: 10px; margin-right: 4px; gap: 4px; border-right: 1px solid #cfcfcf; }
.group:last-child { border: 0; }
.group:first-child { gap: 8px; }
.grip { flex: none; width: 7px; height: 10px; margin-right: 6px; border-left: 1px solid #777; border-right: 1px solid #777; background: linear-gradient(90deg, transparent 2px, #777 2px, #777 3px, transparent 3px); }
.group:first-child .grip { margin-right: 2px; }
.dim { display: flex; align-items: center; gap: 4px; }
.field {
  width: 54px; height: 19px; padding: 0 4px;
  background: #fff; border: 1px solid #d4d4d4; border-top-color: #bdbdbd; color: #777;
}
.pill {
  height: 19px; display: flex; align-items: center; justify-content: center;
  border: 1px solid #b0b0b0; border-radius: 4px;
  background: linear-gradient(#fcfcfc, #f0f0f0);
}
.pill.left { justify-content: flex-start; padding-left: 5px; }
.stepper { width: 11px; height: 19px; display: flex; align-items: center; justify-content: center; border: 1px solid #bdbdbd; border-radius: 5px; background: #f4f4f4; }
.w24 { width: 24px; } .w34 { width: 34px; } .w39 { width: 39px; } .w40 { width: 40px; }
.w65 { width: 65px; } .w74 { width: 74px; } .w85 { width: 85px; } .w133 { width: 133px; }

.corner {
  border-top: 1px solid #555; border-bottom: 1px solid #b4b4b4;
  background: linear-gradient(#8080c0, #8080c0) 8px 0 / 1px 100% no-repeat, linear-gradient(#8080c0, #8080c0) 0 8px / 100% 1px no-repeat, #e6e6e6;
}
.ruler-x { height: 16px; width: 100%; min-width: 0; background: #e6e6e6; border-top: 1px solid #555; border-bottom: 1px solid #b4b4b4; overflow: hidden; }
.ruler-y { grid-row: 3 / 5; background: #e6e6e6; border-right: 1px solid #b4b4b4; overflow: hidden; min-height: 0; }
.ruler-x text, .ruler-y text { font-size: 10px; fill: #333; }
.ruler-y text { text-anchor: end; }
.board {
  min-width: 0; min-height: 0; overflow: hidden;
  background:
    linear-gradient(90deg, #cfcfcf 1px, transparent 1px) 0 0 / 72px 72px,
    linear-gradient(#cfcfcf 1px, transparent 1px) 0 0 / 72px 72px,
    linear-gradient(90deg, #ececec 1px, transparent 1px) 0 0 / 9px 9px,
    linear-gradient(#ececec 1px, transparent 1px) 0 0 / 9px 9px,
    #fff;
}
.hscroll { padding: 4px 7px 0 3px; background: #f6f6f6; border-top: 1px solid #e4e4e4; }
.hthumb { height: 8px; border-radius: 4px; background: #c0c0c0; }

/* diagram */
.box rect { fill: #cbcbcb; stroke: #000; stroke-width: 1; }
.box .thick { stroke-width: 3; stroke-linejoin: round; }
.box .green { fill: #268e52; }
.box .olive { fill: #9a8c2c; }
.box .teal { fill: #078ea3; }
.box .mid { fill: #8f8f8f; }
.box .dark { fill: #646464; }
.diagram text { text-anchor: middle; }
.addr text { font: 12px "Liberation Sans", Arial, sans-serif; }
.addr .white { fill: #fff; }
.addr .bold { font-weight: 700; }
.cn text { font: 12px Lato, "Noto Sans CJK SC", sans-serif; }
.diagram .start { text-anchor: start; }
.big text { font: 26px Lato, sans-serif; }
.note text { font: 16px "Liberation Sans", "Noto Sans CJK SC", sans-serif; }
.edge path { fill: none; stroke: #000; marker-end: url(#head); }
.dots path { stroke-dasharray: 1 3; }
.edge-red { fill: none; stroke: #b03a35; marker-end: url(#head-red); }
.edge-dash { fill: none; stroke: #000; stroke-dasharray: 4 4; marker-start: url(#head-open); marker-end: url(#head-open); }
.pipe { fill: #fff; stroke: #000; }
.person circle { fill: #fff; stroke: #000; filter: url(#soft); }
.person path { fill: none; stroke: #000; }
.person text { font: bold 12px "Liberation Sans", Arial, sans-serif; }

/* inspector */
.inspector { background: #ececec; border-left: 1px solid #a8a8a8; }
.tabs { height: 48px; padding: 3px 0 0 1px; background: linear-gradient(#ececec, #cfcfcf); border-bottom: 1px solid #a6a6a6; }
.tab-row { display: flex; }
.tab { width: 33px; height: 28px; display: flex; align-items: center; justify-content: center; }
.tab.on { background: linear-gradient(90deg, #a0a0a0, #c4c4c4 20%, #c4c4c4 80%, #a0a0a0); }
.tabs p { padding: 1px 0 0 4px; color: #4c4c4c; }
.sect { padding: 1px 19px 26px 9px; border-top: 1px solid; border-image: linear-gradient(90deg, transparent 28px, #bebebe 28px, #ececec) 1; }
.tabs + .sect { border: 0; padding-top: 8px; }
.sect h3 { height: 20px; display: flex; align-items: center; font-weight: 700; }
.serif-a { width: 12px; font: italic bold 17px/14px "Liberation Serif", serif; color: #888; }
.disclose { border: 4px solid transparent; border-top: 8px solid #555; border-bottom: 0; margin: 0 8px 0 7px; }
.rows { display: flex; flex-direction: column; gap: 8px; padding: 6px 0 0 66px; color: #777; }
.loose { gap: 9px; }
.row { display: flex; align-items: center; height: 19px; }
.gap9 { gap: 9px; }
.push { margin-left: auto; }
.row.two { display: grid; grid-template-columns: 101px 1fr; }
.row.wide { display: grid; grid-template-columns: 110px 1fr; }
.row.inset { height: 12px; padding-left: 23px; }
.split { position: relative; border: 1px solid #aaa; border-radius: 4px; background: linear-gradient(#fcfcfc, #f0f0f0); }
.split::after { content: ""; position: absolute; right: 5px; top: 6px; border: 4px solid transparent; border-top: 6px solid #808080; border-bottom: 0; pointer-events: none; }
.fontbtn { width: 48px; height: 17px; border-right: 1px solid #b0b0b0; color: #8fb4dc; font: italic bold 16px/16px "Liberation Serif", serif; }
.family { flex: 1; height: 17px; appearance: none; }
.sel { position: relative; display: block; }
.sel select { appearance: none; width: 100%; height: 19px; display: block; border: 1px solid #aaa; border-radius: 4px; background: linear-gradient(#fcfcfc, #f0f0f0); }
.sel svg { position: absolute; right: 5px; top: 4px; pointer-events: none; }
.seg { display: flex; width: max-content; border: 1px solid #a8a8a8; border-radius: 4px; overflow: hidden; }
.seg button { height: 17px; display: flex; align-items: center; justify-content: center; background: linear-gradient(#fdfdfd, #eee); border-right: 1px solid #b4b4b4; }
.seg button:last-child { border-right: 0; }
.seg button.on { background: #d8d8d8; }
.s28 button { width: 28px; }
.s26 button { width: 26px; }
.seg svg { width: 13px; height: 13px; fill: none; stroke: #777; }
.seg .o, .mini .o { stroke: #f2a48e; }
.seg .l { stroke: #aaa; }
.mini { display: flex; align-items: center; gap: 4px; }
.mini svg { width: 17px; height: 17px; fill: none; stroke: #8a8a8a; }
.mini .dial { fill: #f4f4f4; stroke: #aaa; }
.mini .knob { fill: #bbb; stroke: none; }
.check { display: flex; align-items: center; gap: 5px; }
.check input { appearance: none; width: 12px; height: 12px; border: 1px solid #b4b4b4; border-radius: 3px; background: linear-gradient(#fdfdfd, #eee); position: relative; }
.check input:checked::after { content: ""; position: absolute; left: 3px; top: -3px; width: 4px; height: 10px; border: solid #555; border-width: 0 2px 2px 0; transform: rotate(40deg); }
.rel { margin-left: 8px; }

/* status bar */
.status {
  flex: none; height: 32px;
  display: grid; grid-template-columns: 275px 1fr 301px;
  background: linear-gradient(#cfcfcf, #a9a9a9);
  border-top: 1px solid #777;
}
.status-left { display: flex; align-items: center; gap: 10px; padding: 0 4px 3px 10px; border-right: 1px solid #999; }
.search { flex: 1; height: 19px; display: flex; align-items: center; gap: 4px; padding: 0 6px; background: #fff; border: 1px solid #888; border-radius: 10px; }
.search input { flex: 1; min-width: 0; outline: 0; }
.search input::placeholder { color: #777; }
.gear { width: 39px; height: 22px; display: flex; align-items: center; justify-content: center; border: 1px solid #777; border-radius: 4px; background: linear-gradient(#f0f0f0, #cdcdcd); }
.status-mid { display: flex; align-items: center; padding: 0 4px 3px 4px; }
.status-mid .grip { margin: 0; }
.message { flex: 1; text-align: center; padding: 3px 0 0 56px; }
.zoom { width: 50px; margin-right: 7px; }
.zoom select { height: 21px; padding-left: 4px; border-color: #777; background: linear-gradient(#f0f0f0, #d0d0d0); }
.status-right { display: flex; align-items: center; gap: 6px; padding: 0 0 3px 5px; border-left: 1px solid #999; }
.well { height: 21px; display: flex; align-items: center; padding-left: 4px; border: 1px solid #777; border-color: #666 #999 #999 #777; border-radius: 3px; background: #f1f1f1; }
```
